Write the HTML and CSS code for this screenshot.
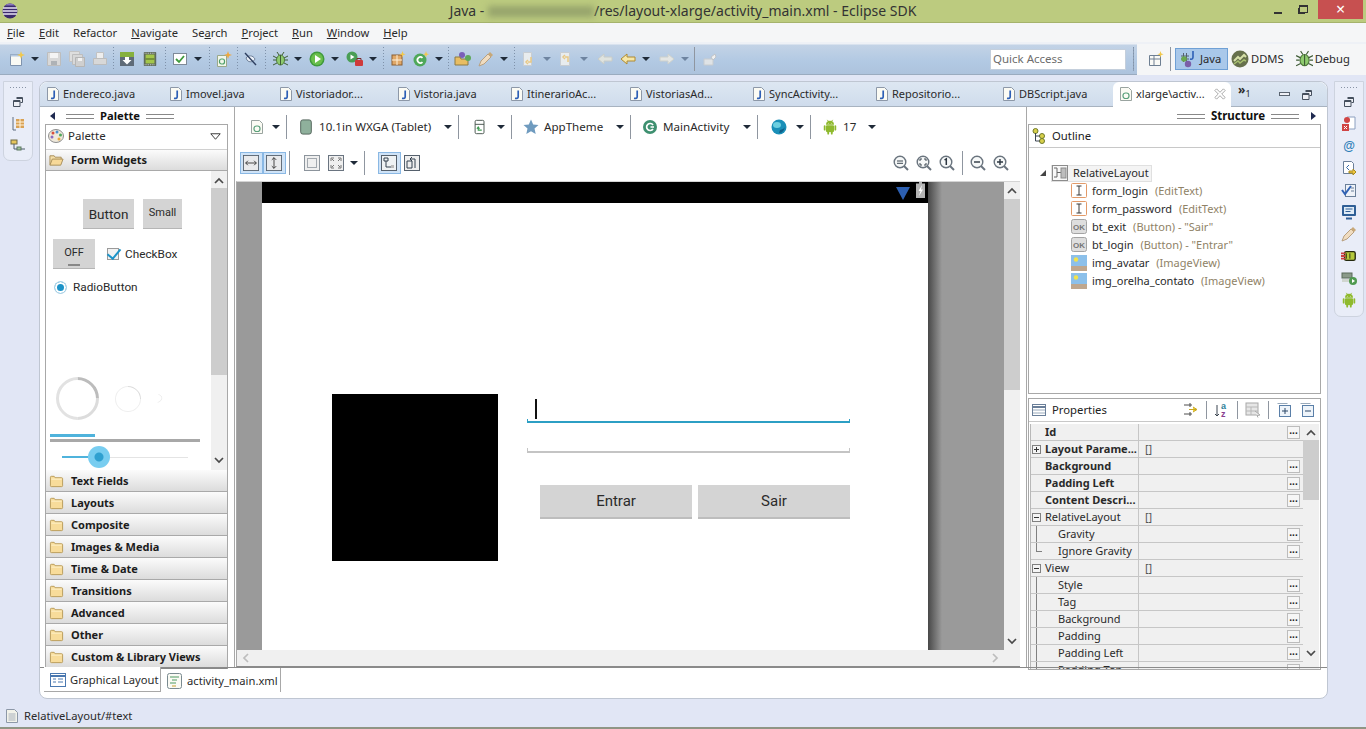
FILE: index.html
```html
<!DOCTYPE html>
<html lang="en">

<head>
  <meta charset="UTF-8">
  <title>Java - activity_main.xml - Eclipse SDK</title>
  <link rel="stylesheet" href="styles.css">
</head>

<body>
  <svg class="defs" xmlns="http://www.w3.org/2000/svg">
    <symbol id="i-eclipse" viewBox="0 0 16 16"><circle cx="8" cy="8" r="7.5" fill="#3b2a6e"/><path d="M1 5h14M.6 8h14.8M1 11h14" stroke="#e8e4f4" stroke-width="1.3"/><path d="M3 2.5a7 7 0 0 1 10 0z" fill="#8a78c0"/></symbol>
    <symbol id="i-java" viewBox="0 0 14 16"><path d="M1.5 1.5h8l3 3v10h-11z" fill="#fbfbf4" stroke="#8d98a8"/><path d="M8.2 4.5v6.2c0 1.6-1.2 2-3.2 1.6" fill="none" stroke="#2d5fb6" stroke-width="1.7"/></symbol>
    <symbol id="i-xml" viewBox="0 0 14 16"><path d="M1.5 1.5h8l3 3v10h-11z" fill="#fbfbf4" stroke="#9aa4a0"/><rect x="4" y="7" width="6" height="5.5" rx="2.5" fill="none" stroke="#5aa07a" stroke-width="1.2"/></symbol>
    <symbol id="i-close" viewBox="0 0 14 14"><path d="M1 3l2-2 4 4 4-4 2 2-4 4 4 4-2 2-4-4-4 4-2-2 4-4z" fill="#fff" stroke="#9a9a9a"/></symbol>
    <symbol id="i-restore" viewBox="0 0 16 16"><path d="M6.5 3.500h6v5h-2M3.500 6.500h6.500v6h-6.500z" fill="#eef0f6" stroke="#46505e"/><path d="M3.500 7.500h6.500M6.500 4.500h6" stroke="#46505e"/></symbol>
    <symbol id="i-minimize" viewBox="0 0 16 16"><rect x="2.500" y="5.500" width="10" height="3" fill="#eef0f6" stroke="#59636f"/></symbol>
    <symbol id="i-hier" viewBox="0 0 16 16"><path d="M3 1v13h3" fill="none" stroke="#5e6c7e"/><path d="M6 3h8v9H6z" fill="#d8a155"/><path d="M6 6h8M6 9h8M10 3v9" stroke="#fff3dc"/></symbol>
    <symbol id="i-tree" viewBox="0 0 16 16"><rect x="1" y="2" width="6" height="4" fill="#e6c65c" stroke="#6f6a45"/><rect x="7" y="9" width="4" height="3" fill="#9fc29a" stroke="#5c7a60"/><path d="M4 6v5h3M11 11h4" stroke="#4f5c6b" fill="none"/></symbol>
    <symbol id="i-new" viewBox="0 0 16 16"><path d="M1.500 3.500h11v11h-11z" fill="#fafaf4" stroke="#7f93ad"/><path d="M1.500 3.500h11v2h-11z" fill="#b5c8e0"/><path d="M12 0l1 3 3 1-3 1-1 3-1-3-3-1 3-1z" fill="#f2c84b"/></symbol>
    <symbol id="i-save" viewBox="0 0 16 16"><path d="M1.500 1.500h13v13h-13z" fill="#d8d8d8" stroke="#bdbdbd"/><path d="M4 2h8v5H4z" fill="#f4f4f4"/><path d="M5 10h6v4H5z" fill="#aeb2b6"/></symbol>
    <symbol id="i-saveall" viewBox="0 0 16 16"><path d="M.500.500h10v10H.500z" fill="#dedede" stroke="#c4c4c4"/><path d="M3.500 3.500h10v10h-10z" fill="#d8d8d8" stroke="#bdbdbd"/><path d="M6.500 6.500h9v9h-9z" fill="#cfcfcf" stroke="#b5b5b5"/><path d="M9 7h4v3H9z" fill="#f2f2f2"/></symbol>
    <symbol id="i-print" viewBox="0 0 16 16"><path d="M4.500 1.500h7v6h-7z" fill="#eeeeee" stroke="#c2c2c2"/><path d="M1.500 7.500h13v6h-13z" fill="#d8d8d8" stroke="#bdbdbd"/></symbol>
    <symbol id="i-sdk" viewBox="0 0 16 16"><rect x="1" y="1" width="14" height="5" fill="#86b13e"/><rect x="1" y="6" width="14" height="9" fill="#5f6b78"/><path d="M6 6h4v3h2.500L8 13.500 3.500 9H6z" fill="#fff"/></symbol>
    <symbol id="i-avd" viewBox="0 0 16 18"><rect x="1" y="1" width="14" height="16" rx="1" fill="#5f6b5a"/><rect x="3" y="4" width="10" height="10" fill="#a3c64a"/><path d="M3 9h10" stroke="#5f7a30" stroke-width="1.500"/><path d="M2 2.500h12M2 15.500h12" stroke="#e6e6e6" stroke-dasharray="1 1"/></symbol>
    <symbol id="i-check" viewBox="0 0 16 16"><rect x="1.500" y="2.500" width="13" height="11" fill="#fff" stroke="#7f8a98"/><path d="M4 8l3 3 5-6" fill="none" stroke="#3f9a3c" stroke-width="1.800"/></symbol>
    <symbol id="i-newand" viewBox="0 0 16 16"><path d="M1.500 4.500h9v11h-9z" fill="#f2f6ea" stroke="#9aa88a"/><rect x="3.500" y="8" width="5" height="5" rx="2" fill="none" stroke="#4fa06a" stroke-width="1.200"/><path d="M12 0l1 3 3 1-3 1-1 3-1-3-3-1 3-1z" fill="#f0a83c"/></symbol>
    <symbol id="i-mark" viewBox="0 0 16 16"><path d="M3 7c2-3 7-3 9 1-1 3-6 4-8 1z" fill="#eaf0f8" stroke="#6f8098"/><path d="M2 2l11 12" stroke="#2e3f60" stroke-width="1.400"/></symbol>
    <symbol id="i-bug" viewBox="0 0 16 16"><ellipse cx="8.500" cy="9" rx="4" ry="5" fill="#8ecb6e" stroke="#4e7a3a"/><path d="M8.500 4v10M1 5l4 2M1 9h3M1 14l4-2M16 5l-4 2M16 9h-3M16 14l-4-2M5 1l2 3M12 1l-2 3" stroke="#3f5c36" fill="none"/></symbol>
    <symbol id="i-run" viewBox="0 0 16 16"><circle cx="8" cy="8" r="7.500" fill="#3f9a3c"/><circle cx="8" cy="8" r="6" fill="#6abf4c"/><path d="M6 4l6 4-6 4z" fill="#fff"/></symbol>
    <symbol id="i-runext" viewBox="0 0 18 16"><circle cx="6" cy="6" r="5.500" fill="#4a9e55"/><path d="M4.500 3.500l4 2.500-4 2.500z" fill="#fff"/><rect x="9" y="9" width="8" height="6" rx="1" fill="#cf3a3a"/><path d="M11 9V7.500h4V9" fill="none" stroke="#7a2323"/></symbol>
    <symbol id="i-newpkg" viewBox="0 0 16 16"><rect x="2" y="4" width="10" height="10" fill="#e0a868" stroke="#8c5f30"/><path d="M2 9h10M7 4v10" stroke="#fff0d8"/><path d="M12.500 0l.800 2.400 2.400.800-2.400.800-.800 2.400-.800-2.400-2.400-.800 2.400-.800z" fill="#f2c84b"/></symbol>
    <symbol id="i-newclass" viewBox="0 0 16 16"><circle cx="7" cy="9" r="6.500" fill="#4fa85a"/><path d="M9.500 6.800A3 3 0 1 0 9.500 11.200" fill="none" stroke="#fff" stroke-width="1.700"/><path d="M13 0l.800 2.400 2.200.800-2.200.800-.800 2.400-.800-2.400-2.200-.800 2.200-.800z" fill="#f2c84b"/></symbol>
    <symbol id="i-openproj" viewBox="0 0 18 16"><circle cx="8" cy="4" r="3" fill="#7a5fb8"/><path d="M1 6h5l1 2h7v6H1z" fill="#e8bd62" stroke="#8c7a45"/><circle cx="14" cy="7" r="3" fill="#5fa85a"/></symbol>
    <symbol id="i-pencil" viewBox="0 0 16 16"><path d="M1 15l2-5 7-7 3 3-7 7z" fill="#f0dcc0" stroke="#b8a080"/><path d="M10 3l2-2 3 3-2 2z" fill="#c8a878"/></symbol>
    <symbol id="i-navdown" viewBox="0 0 16 16"><path d="M2.500 1.500h8v13h-8z" fill="#e8ecee" stroke="#c8cdd2"/><path d="M10 6v5H7M7 9l-2 2 2 2" fill="none" stroke="#e8c884" stroke-width="1.500"/></symbol>
    <symbol id="i-navup" viewBox="0 0 16 16"><path d="M2.500 1.500h9v13h-9z" fill="#e8ecee" stroke="#c8cdd2"/><path d="M10 11V6H7M7 4L5 6l2 2" fill="none" stroke="#e8c884" stroke-width="1.500"/></symbol>
    <symbol id="i-left" viewBox="0 0 16 12"><path d="M1 6l6-5v3h8v4H7v3z" fill="#f6e7a8" stroke="#b08a30"/></symbol>
    <symbol id="i-leftoff" viewBox="0 0 16 12"><path d="M1 6l6-5v3h8v4H7v3z" fill="#dfe3df" stroke="#c8ccc8"/></symbol>
    <symbol id="i-rightoff" viewBox="0 0 16 12"><path d="M15 6L9 1v3H1v4h8v3z" fill="#e4e6e4" stroke="#ccd0cc"/></symbol>
    <symbol id="i-pin" viewBox="0 0 16 16"><path d="M2 8h9v6H2z" fill="#dfe3e6" stroke="#c8cccf"/><path d="M9 6l4-3 1 3-3 3z" fill="#f0f0f0" stroke="#c0c4c8"/></symbol>
    <symbol id="i-persp" viewBox="0 0 16 16"><path d="M1.500 4.500h11v10h-11z" fill="#fafaf6" stroke="#6e7f92"/><path d="M1.500 8h11M6 4.500v10" stroke="#6e7f92"/><path d="M12.500 0l.800 2.400 2.400.800-2.400.800-.800 2.400-.800-2.400-2.400-.800 2.400-.800z" fill="#f2c84b"/></symbol>
    <symbol id="i-javap" viewBox="0 0 18 18"><path d="M2 6h8M2 9h8M4.500 3v9M7.500 3v9" stroke="#55616e"/><circle cx="5" cy="9" r="2.800" fill="#6aa84f"/><circle cx="9" cy="14" r="3.200" fill="#7b5fa8"/><path d="M14 1v6c0 2-1 2.500-3 2" fill="none" stroke="#2d5fb6" stroke-width="1.600"/></symbol>
    <symbol id="i-ddms" viewBox="0 0 18 18"><circle cx="9" cy="9" r="8.500" fill="#66704c"/><path d="M3 11l4-4 2 2 4-4 2 2" fill="none" stroke="#d6e0a8" stroke-width="2"/><path d="M3 14l4-3 2 2 4-3 2 1" fill="none" stroke="#a8c070" stroke-width="1.500"/></symbol>
    <symbol id="i-palette" viewBox="0 0 16 16"><ellipse cx="8" cy="8" rx="7.500" ry="6.500" fill="#efe9dc" stroke="#8d8d8d"/><circle cx="5" cy="5" r="1.500" fill="#d94f3d"/><circle cx="9" cy="4" r="1.500" fill="#4b8fd0"/><circle cx="12.500" cy="7" r="1.500" fill="#4fa85a"/><circle cx="11" cy="11" r="1.500" fill="#e8a93c"/><circle cx="4" cy="9" r="1.500" fill="#8c6abf"/></symbol>
    <symbol id="i-tri-open" viewBox="0 0 14 8"><path d="M1 .5h12L7 7.500z" fill="#fff" stroke="#333" stroke-width="1.200"/></symbol>
    <symbol id="i-folderopen" viewBox="0 0 16 14"><path d="M1 12V2.500h4.500l1 1.500H13v2" fill="#f5dfa8" stroke="#a88d58"/><path d="M1 12.500l2.500-6.500H15l-2.500 6.500z" fill="#f7d998" stroke="#a88d58"/></symbol>
    <symbol id="i-folder" viewBox="0 0 16 14"><path d="M1.500 3a1 1 0 0 1 1-1h3l1 1.500h7a1 1 0 0 1 1 1V12a1 1 0 0 1-1 1h-11a1 1 0 0 1-1-1z" fill="#f8dc9a" stroke="#b89a58"/><path d="M2.500 5h11" stroke="#fff2cc"/></symbol>
    <symbol id="i-device" viewBox="0 0 14 18"><rect x="1" y="1" width="12" height="16" rx="2.500" fill="#8fb09c" stroke="#4c5c54"/></symbol>
    <symbol id="i-rotate" viewBox="0 0 14 18"><rect x="1.500" y="1.500" width="10" height="15" rx="1.500" fill="#fff" stroke="#3d4a44"/><path d="M1.500 6h10" stroke="#3d4a44"/><path d="M9 12.500H5V9.500M3.500 11L5 9l1.500 2" fill="none" stroke="#3e9a50" stroke-width="1.200"/></symbol>
    <symbol id="i-star" viewBox="0 0 16 16"><path d="M8 .5l2.200 5 5.300.5-4 3.600 1.200 5.400L8 12.200 3.300 15l1.200-5.400-4-3.600 5.300-.5z" fill="#6f9bbf"/></symbol>
    <symbol id="i-activity" viewBox="0 0 16 16"><circle cx="8" cy="8" r="7" fill="#3e9070"/><path d="M11 6a3.500 3.500 0 1 0 0 4M8.500 8H12" fill="none" stroke="#fff" stroke-width="1.700"/></symbol>
    <symbol id="i-globe" viewBox="0 0 16 16"><circle cx="8" cy="8" r="7.500" fill="#1a8fb8"/><ellipse cx="6" cy="6" rx="4" ry="3" fill="#6ccfe0"/><path d="M9 11c2-1 4-1 5-3-1 4-3 6-6 6z" fill="#0f5f88"/></symbol>
    <symbol id="i-android" viewBox="0 0 16 18"><path d="M3.500 6.500a4.500 4.500 0 0 1 9 0z" fill="#8fba2e"/><rect x="3.500" y="7" width="9" height="7.500" rx="1" fill="#8fba2e"/><rect x="1" y="7" width="2" height="6" rx="1" fill="#8fba2e"/><rect x="13" y="7" width="2" height="6" rx="1" fill="#8fba2e"/><rect x="5" y="14" width="2" height="3.500" rx="1" fill="#8fba2e"/><rect x="9" y="14" width="2" height="3.500" rx="1" fill="#8fba2e"/><path d="M5 1l1.500 2M11 1L9.500 3" stroke="#8fba2e"/><path d="M6 5h.500M9.500 5h.500" stroke="#fff"/></symbol>
    <symbol id="i-hfit" viewBox="0 0 18 18"><rect x=".5" y=".5" width="17" height="17" fill="#e9eaec" stroke="#55606c"/><path d="M3 9h12M5.500 6.500L3 9l2.500 2.500M12.500 6.500L15 9l-2.500 2.500" fill="none" stroke="#333"/></symbol>
    <symbol id="i-vfit" viewBox="0 0 18 18"><rect x=".5" y=".5" width="17" height="17" fill="#e9eaec" stroke="#55606c"/><path d="M9 3v12M6.500 5.500L9 3l2.500 2.500M6.500 12.500L9 15l2.500-2.500" fill="none" stroke="#333"/></symbol>
    <symbol id="i-dotted" viewBox="0 0 16 16"><rect x=".5" y=".5" width="15" height="15" fill="#efefef" stroke="#8c949c"/><rect x="3.500" y="3.500" width="9" height="9" fill="none" stroke="#55606c" stroke-dasharray="1 1"/></symbol>
    <symbol id="i-expand" viewBox="0 0 16 16"><rect x=".5" y=".5" width="15" height="15" fill="#efefef" stroke="#6a7480"/><path d="M3 6V3h3M10 3h3v3M13 10v3h-3M6 13H3v-3M4 4l2 2M12 4l-2 2M12 12l-2-2M4 12l2-2" fill="none" stroke="#777"/></symbol>
    <symbol id="i-lay1" viewBox="0 0 16 16"><rect x=".5" y=".5" width="15" height="15" fill="#eef2f4" stroke="#55606c"/><path d="M3 3h4v3H3zM5 6v6h5" fill="none" stroke="#33404e"/><rect x="10" y="10" width="3" height="3" fill="#bbb"/></symbol>
    <symbol id="i-lay2" viewBox="0 0 16 16"><rect x=".5" y=".5" width="15" height="15" fill="#efefef" stroke="#55606c"/><path d="M3 6h5v7H3zM11 13V4H6" fill="none" stroke="#33404e"/><path d="M8 2L6 4l2 2" fill="none" stroke="#33404e"/></symbol>
    <symbol id="i-zoomout" viewBox="0 0 16 16"><circle cx="7" cy="7" r="5.800" fill="#f6f8f8" stroke="#6a747e" stroke-width="1.400"/><path d="M4 6h6M4 8.300h6" stroke="#3c4650"/><path d="M11 11l4 4" stroke="#6a747e" stroke-width="2"/></symbol>
    <symbol id="i-zoomfit" viewBox="0 0 16 16"><circle cx="7" cy="7" r="5.800" fill="#f6f8f8" stroke="#6a747e" stroke-width="1.400"/><path d="M4 6V4h2M10 6V4H8M4 8v2h2M10 8v2H8" fill="none" stroke="#3c4650"/><path d="M11 11l4 4" stroke="#6a747e" stroke-width="2"/></symbol>
    <symbol id="i-zoom1" viewBox="0 0 16 16"><circle cx="7" cy="7" r="5.800" fill="#f6f8f8" stroke="#6a747e" stroke-width="1.400"/><path d="M5.500 5L7.300 3.800V10" fill="none" stroke="#2c3640" stroke-width="1.500"/><path d="M11 11l4 4" stroke="#6a747e" stroke-width="2"/></symbol>
    <symbol id="i-zoomminus" viewBox="0 0 16 16"><circle cx="7" cy="7" r="5.800" fill="#f6f8f8" stroke="#6a747e" stroke-width="1.400"/><path d="M4 7h6" stroke="#2c3640" stroke-width="1.400"/><path d="M11 11l4 4" stroke="#6a747e" stroke-width="2"/></symbol>
    <symbol id="i-zoomplus" viewBox="0 0 16 16"><circle cx="7" cy="7" r="5.800" fill="#f6f8f8" stroke="#6a747e" stroke-width="1.400"/><path d="M4 7h6M7 4v6" stroke="#2c3640" stroke-width="1.400"/><path d="M11 11l4 4" stroke="#6a747e" stroke-width="2"/></symbol>
    <symbol id="i-outline" viewBox="0 0 16 16"><circle cx="3.500" cy="3" r="2.500" fill="#d8d04a" stroke="#6f7a2a"/><circle cx="10" cy="8" r="2.500" fill="#d8d04a" stroke="#6f7a2a"/><circle cx="10" cy="13" r="2.500" fill="#d8d04a" stroke="#6f7a2a"/><path d="M3.500 5v8H8M3.500 8H8" fill="none" stroke="#3a4450"/></symbol>
    <symbol id="i-relative" viewBox="0 0 16 16"><rect x=".5" y=".5" width="15" height="15" fill="#f8f8f8" stroke="#8c8c8c"/><path d="M2 3h3v9H2M5 7.500h4" fill="none" stroke="#666"/><rect x="9" y="3" width="5" height="10" fill="#bdbdbd" stroke="#8c8c8c"/></symbol>
    <symbol id="i-edit" viewBox="0 0 16 16"><rect x=".5" y=".5" width="15" height="14" rx="1" fill="#fff" stroke="#e39a68"/><path d="M5.500 3h5M5.500 12h5M8 3v9" stroke="#3a3a3a"/></symbol>
    <symbol id="i-ok" viewBox="0 0 16 16"><rect x=".5" y=".5" width="15" height="14" rx="2" fill="#dedede" stroke="#a4a4a4"/><text class="ok-mark" x="8" y="11" text-anchor="middle">OK</text></symbol>
    <symbol id="i-image" viewBox="0 0 16 16"><rect width="16" height="11" fill="#8cc0ea"/><rect y="11" width="16" height="5" fill="#bfa78e"/><circle cx="5" cy="4.500" r="2.200" fill="#f2e24a"/></symbol>
    <symbol id="i-props" viewBox="0 0 14 14"><rect x=".5" y="1.500" width="13" height="11" fill="#fff" stroke="#6a7f99"/><path d="M.5 4h13" stroke="#6a7f99" stroke-width="2"/><path d="M1 7h12M1 10h12" stroke="#9ab"/></symbol>
    <symbol id="i-filter" viewBox="0 0 16 16"><path d="M1 3h8M1 12h8M7 1v4M7 10v4" stroke="#4c4c4c" fill="none"/><path d="M6 7.500h7M10 5l4 2.500-4 2.500" fill="#f0d040" stroke="#c8a820"/></symbol>
    <symbol id="i-az" viewBox="0 0 16 16"><path d="M3 3v11M1 12l2 2 2-2" fill="none" stroke="#3a4450"/><text class="az-a" x="7" y="7">a</text><text class="az-z" x="7" y="15">z</text></symbol>
    <symbol id="i-propoff" viewBox="0 0 16 16"><rect x="1" y="1" width="12" height="12" fill="#e6e6e6" stroke="#a8a8a8"/><path d="M1 5h12M1 9h12M6 5v8" stroke="#b8b8b8"/><path d="M10 9l5 4-3 .500 1 2" fill="#eee" stroke="#aaa"/></symbol>
    <symbol id="i-plusbox" viewBox="0 0 16 16"><path d="M1.500 1.500h10" stroke="#9ab" fill="none"/><rect x="3.500" y="3.500" width="11" height="11" fill="#eef4fa" stroke="#5a7fa8"/><path d="M6 9h6M9 6v6" stroke="#2c4868"/></symbol>
    <symbol id="i-minusbox" viewBox="0 0 16 16"><path d="M1.500 1.500h10" stroke="#9ab" fill="none"/><rect x="3.500" y="3.500" width="11" height="11" fill="#eef4fa" stroke="#5a7fa8"/><path d="M6 9h6" stroke="#2c4868"/></symbol>
    <symbol id="i-graph" viewBox="0 0 16 16"><rect x=".5" y="1.500" width="15" height="13" fill="#fff" stroke="#4a78b0"/><path d="M.5 4h15" stroke="#4a78b0" stroke-width="2"/><path d="M3 7h3M3 10h3M8 7h5M8 10h5" stroke="#4a78b0"/></symbol>
    <symbol id="i-xmlsrc" viewBox="0 0 16 16"><rect x=".5" y=".5" width="14" height="15" rx="2" fill="#fafaf4" stroke="#7a8a90"/><path d="M3 4h9M5 7h5M3 10h6" stroke="#4f9a60"/><path d="M5 13h4" stroke="#c8a030"/></symbol>
    <symbol id="i-doc" viewBox="0 0 14 16"><path d="M1.500 1.500h8l3 3v10h-11z" fill="#f2f2ea" stroke="#8d98a8"/><path d="M3.500 6h7M3.500 8h7M3.500 10h7M3.500 12h7" stroke="#a8b0bc"/></symbol>
    <symbol id="i-errors" viewBox="0 0 16 16"><path d="M6 1h8v12H8" fill="#fff" stroke="#8ca0c0"/><rect x="1" y="8" width="7" height="7" fill="#d04545"/><path d="M3 10l3 3M6 10l-3 3" stroke="#fff"/><circle cx="6" cy="4" r="3" fill="#d04545"/></symbol>
    <symbol id="i-at" viewBox="0 0 16 16"><text class="at-mark" x="8" y="12" text-anchor="middle">@</text></symbol>
    <symbol id="i-decl" viewBox="0 0 16 16"><path d="M2.500 1.500h8l2 2v10h-10z" fill="#fff" stroke="#6a7f99"/><path d="M8 5L5.500 7.500 8 10" fill="none" stroke="#3a6aa8"/><path d="M8 11h4V9l3 3-3 3v-2H8z" fill="#f0c840" stroke="#a88a20"/></symbol>
    <symbol id="i-tasks" viewBox="0 0 16 16"><rect x="4.500" y="2.500" width="10" height="12" fill="#eef2f8" stroke="#6a7f99"/><path d="M10 6h3M10 9h3" stroke="#6a7f99"/><path d="M1 8l3 4 6-8" fill="none" stroke="#2f62b4" stroke-width="2"/></symbol>
    <symbol id="i-monitor" viewBox="0 0 16 16"><rect x="1" y="1" width="14" height="11" rx="1" fill="#2f5f96"/><rect x="3" y="3" width="10" height="7" fill="#e0ecf6"/><path d="M4.500 5h7M4.500 7.500h5" stroke="#2f5f96"/><path d="M5 14.500h6" stroke="#2f5f96" stroke-width="2"/></symbol>
    <symbol id="i-logcat" viewBox="0 0 18 14"><rect x="4" y="2" width="12" height="10" rx="2" fill="#b5c93c" stroke="#23280e" stroke-width="1.500"/><path d="M0 4h5M0 7h5M0 10h5" stroke="#c84040" stroke-width="2"/><path d="M6 4v6M10 4v6" stroke="#23280e"/></symbol>
    <symbol id="i-devices" viewBox="0 0 16 16"><rect x="1" y="3" width="10" height="5" fill="#8a9a8a" stroke="#5a6a5a"/><rect x="1" y="9" width="8" height="3" fill="#d0d6d0"/><circle cx="12" cy="11" r="4" fill="#4f9a50"/><path d="M11 9l3 2-3 2z" fill="#fff"/></symbol>
    <symbol id="i-bolt" viewBox="0 0 9 16"><path d="M3 0h3v1.500h3V16H0V1.500h3z" fill="#b4b4b4"/><path d="M6 3L2.500 9H4.500L3 14l4-6.500H5z" fill="#fff"/></symbol>
    <symbol id="i-chev-up" viewBox="0 0 10 8"><path d="M1 6l4-4 4 4" fill="none" stroke="#4a4a4a" stroke-width="1.700"/></symbol>
    <symbol id="i-chev-down" viewBox="0 0 10 8"><path d="M1 2l4 4 4-4" fill="none" stroke="#4a4a4a" stroke-width="1.700"/></symbol>
    <symbol id="i-chev-left" viewBox="0 0 8 10"><path d="M6 1L2 5l4 4" fill="none" stroke="#bdbdbd" stroke-width="1.700"/></symbol>
    <symbol id="i-chev-right" viewBox="0 0 8 10"><path d="M2 1l4 4-4 4" fill="none" stroke="#bdbdbd" stroke-width="1.700"/></symbol>
  </svg>

  <header class="titlebar">
    <svg class="title-logo"><use href="#i-eclipse"/></svg>
    <div class="title-text">Java - <span class="blurred"></span>/res/layout-xlarge/activity_main.xml - Eclipse SDK</div>
    <div class="win-controls">
      <span class="win-min"></span>
      <span class="win-max"></span>
      <span class="win-close">&times;</span>
    </div>
  </header>

  <nav class="menubar">
    <span><u>F</u>ile</span><span><u>E</u>dit</span><span>Refactor</span><span><u>N</u>avigate</span><span>Se<u>a</u>rch</span><span><u>P</u>roject</span><span><u>R</u>un</span><span><u>W</u>indow</span><span><u>H</u>elp</span>
  </nav>

  <div class="toolbar">
    <div class="tools">
      <svg class="ic"><use href="#i-new"/></svg><b class="drop"></b>
      <svg class="ic"><use href="#i-save"/></svg><svg class="ic"><use href="#i-saveall"/></svg><svg class="ic"><use href="#i-print"/></svg>
      <i class="grip tight"></i>
      <svg class="ic"><use href="#i-sdk"/></svg><svg class="ic"><use href="#i-avd"/></svg>
      <i class="grip loose"></i>
      <svg class="ic"><use href="#i-check"/></svg><b class="drop"></b>
      <i class="grip loose"></i>
      <svg class="ic"><use href="#i-newand"/></svg>
      <i class="grip tight"></i>
      <svg class="ic"><use href="#i-mark"/></svg>
      <i class="grip"></i>
      <svg class="ic"><use href="#i-bug"/></svg><b class="drop"></b>
      <svg class="ic"><use href="#i-run"/></svg><b class="drop"></b>
      <svg class="ic wide"><use href="#i-runext"/></svg><b class="drop"></b>
      <i class="grip"></i>
      <svg class="ic"><use href="#i-newpkg"/></svg>
      <svg class="ic"><use href="#i-newclass"/></svg><b class="drop"></b>
      <i class="grip tight"></i>
      <svg class="ic wide"><use href="#i-openproj"/></svg>
      <svg class="ic"><use href="#i-pencil"/></svg><b class="drop"></b>
      <i class="grip"></i>
      <svg class="ic"><use href="#i-navdown"/></svg><b class="drop off"></b>
      <svg class="ic"><use href="#i-navup"/></svg><b class="drop off"></b>
      <svg class="ic nudge"><use href="#i-leftoff"/></svg>
      <svg class="ic"><use href="#i-left"/></svg><b class="drop"></b>
      <svg class="ic nudge"><use href="#i-rightoff"/></svg><b class="drop off"></b>
      <i class="rule"></i>
      <svg class="ic"><use href="#i-pin"/></svg>
    </div>
    <div class="quick">Quick Access</div>
    <i class="grip dark"></i>
    <div class="perspectives">
      <svg class="ic"><use href="#i-persp"/></svg>
      <i class="rule"></i>
      <span class="persp current"><svg class="ic big"><use href="#i-javap"/></svg>Java</span>
      <span class="persp ddms"><svg class="ic big"><use href="#i-ddms"/></svg>DDMS</span>
      <span class="persp debug"><svg class="ic big"><use href="#i-bug"/></svg>Debug</span>
    </div>
  </div>

  <main class="workspace">
    <aside class="trim left-trim">
      <i class="trim-dots"></i>
      <svg class="ic"><use href="#i-restore"/></svg>
      <svg class="ic"><use href="#i-hier"/></svg>
      <svg class="ic"><use href="#i-tree"/></svg>
    </aside>

    <section class="editor">
      <div class="tabs">
        <div class="tab"><svg class="tab-ic"><use href="#i-java"/></svg>Endereco.java</div>
        <div class="tab"><svg class="tab-ic"><use href="#i-java"/></svg>Imovel.java</div>
        <div class="tab"><svg class="tab-ic"><use href="#i-java"/></svg>Vistoriador....</div>
        <div class="tab"><svg class="tab-ic"><use href="#i-java"/></svg>Vistoria.java</div>
        <div class="tab"><svg class="tab-ic"><use href="#i-java"/></svg>ItinerarioAc...</div>
        <div class="tab"><svg class="tab-ic"><use href="#i-java"/></svg>VistoriasAd...</div>
        <div class="tab"><svg class="tab-ic"><use href="#i-java"/></svg>SyncActivity...</div>
        <div class="tab"><svg class="tab-ic"><use href="#i-java"/></svg>Repositorio...</div>
        <div class="tab"><svg class="tab-ic"><use href="#i-java"/></svg>DBScript.java</div>
        <div class="tab active"><svg class="tab-ic"><use href="#i-xml"/></svg>xlarge\activ...<svg class="tab-x"><use href="#i-close"/></svg></div>
        <div class="tab-rest">
          <span class="more">&raquo;<sub>1</sub></span>
          <svg class="ic"><use href="#i-minimize"/></svg>
          <svg class="ic"><use href="#i-restore"/></svg>
        </div>
      </div>

      <div class="editor-body">
        <div class="palette-pane">
          <div class="sash-head">
            <b class="tri-left"></b><i class="sash"></i><strong>Palette</strong><i class="sash"></i>
          </div>
          <div class="palette">
            <div class="palette-top"><svg class="ic"><use href="#i-palette"/></svg>Palette<svg class="tri-open"><use href="#i-tri-open"/></svg></div>
            <div class="cat open"><svg class="folder"><use href="#i-folderopen"/></svg>Form Widgets</div>
            <div class="widgets">
              <div class="widget-list">
                <div class="w-row first">
                  <span class="w-btn big">Button</span>
                  <span class="w-btn small">Small</span>
                </div>
                <div class="w-row second">
                  <span class="w-toggle">OFF</span>
                  <span class="w-check"></span>
                  <span class="w-label">CheckBox</span>
                </div>
                <div class="w-row third">
                  <span class="w-radio"></span>
                  <span class="w-label">RadioButton</span>
                </div>
                <div class="w-row spinners">
                  <span class="spin large"></span>
                  <span class="spin medium"></span>
                  <span class="spin tiny"></span>
                </div>
                <div class="bar-blue"></div>
                <div class="bar-gray"></div>
                <div class="seek"><span class="seek-fill"></span><span class="seek-thumb"></span><span class="seek-rest"></span></div>
              </div>
              <div class="scroll-v palette-scroll">
                <svg class="chev"><use href="#i-chev-up"/></svg>
                <i class="thumb"></i>
                <svg class="chev"><use href="#i-chev-down"/></svg>
              </div>
            </div>
            <div class="cat"><svg class="folder"><use href="#i-folder"/></svg>Text Fields</div>
            <div class="cat"><svg class="folder"><use href="#i-folder"/></svg>Layouts</div>
            <div class="cat"><svg class="folder"><use href="#i-folder"/></svg>Composite</div>
            <div class="cat"><svg class="folder"><use href="#i-folder"/></svg>Images &amp; Media</div>
            <div class="cat"><svg class="folder"><use href="#i-folder"/></svg>Time &amp; Date</div>
            <div class="cat"><svg class="folder"><use href="#i-folder"/></svg>Transitions</div>
            <div class="cat"><svg class="folder"><use href="#i-folder"/></svg>Advanced</div>
            <div class="cat"><svg class="folder"><use href="#i-folder"/></svg>Other</div>
            <div class="cat"><svg class="folder"><use href="#i-folder"/></svg>Custom &amp; Library Views</div>
          </div>
        </div>

        <div class="center-pane">
          <div class="config-row">
            <svg class="ic"><use href="#i-xml"/></svg><b class="drop"></b><i class="rule"></i>
            <svg class="ic"><use href="#i-device"/></svg><span class="cfg cfg-device">10.1in WXGA (Tablet)</span><b class="drop"></b><i class="rule"></i>
            <svg class="ic nudge-both"><use href="#i-rotate"/></svg><b class="drop"></b><i class="rule"></i>
            <svg class="ic"><use href="#i-star"/></svg><span class="cfg cfg-theme">AppTheme</span><b class="drop"></b><i class="rule"></i>
            <svg class="ic"><use href="#i-activity"/></svg><span class="cfg cfg-activity">MainActivity</span><b class="drop"></b><i class="rule"></i>
            <svg class="ic nudge-both"><use href="#i-globe"/></svg><b class="drop"></b><i class="rule"></i>
            <svg class="ic"><use href="#i-android"/></svg><span class="cfg cfg-api">17</span><b class="drop"></b>
          </div>
          <div class="view-row">
            <span class="view-group fit-group">
              <span class="toggle on"><svg><use href="#i-hfit"/></svg></span>
              <span class="toggle on"><svg><use href="#i-vfit"/></svg></span>
            </span>
            <i class="rule"></i>
            <span class="view-group grid-group">
              <svg class="ic"><use href="#i-dotted"/></svg>
              <svg class="ic"><use href="#i-expand"/></svg><b class="drop"></b>
            </span>
            <i class="rule"></i>
            <span class="view-group lay-group">
              <span class="toggle on"><svg><use href="#i-lay1"/></svg></span>
              <span class="toggle"><svg><use href="#i-lay2"/></svg></span>
            </span>
            <span class="view-zoom">
              <svg class="ic"><use href="#i-zoomout"/></svg>
              <svg class="ic"><use href="#i-zoomfit"/></svg>
              <svg class="ic"><use href="#i-zoom1"/></svg>
              <i class="rule"></i>
              <svg class="ic"><use href="#i-zoomminus"/></svg>
              <svg class="ic"><use href="#i-zoomplus"/></svg>
            </span>
          </div>
          <div class="canvas-frame">
            <div class="canvas-main">
              <div class="canvas">
                <div class="device">
                  <div class="android-bar">
                    <span class="wifi"></span>
                    <svg class="battery"><use href="#i-bolt"/></svg>
                  </div>
                  <div class="login">
                    <div class="avatar"></div>
                    <div class="login-form">
                      <div class="edit focus"><span class="caret"></span></div>
                      <div class="edit"></div>
                      <div class="login-buttons">
                        <span class="a-btn">Entrar</span>
                        <span class="a-btn">Sair</span>
                      </div>
                    </div>
                  </div>
                </div>
                <div class="device-shadow"></div>
              </div>
              <div class="scroll-h">
                <svg class="chev-h"><use href="#i-chev-left"/></svg>
                <svg class="chev-h"><use href="#i-chev-right"/></svg>
              </div>
            </div>
            <div class="scroll-v canvas-scroll">
              <svg class="chev"><use href="#i-chev-up"/></svg>
              <i class="thumb"></i>
              <svg class="chev"><use href="#i-chev-down"/></svg>
            </div>
          </div>
        </div>

        <div class="side-pane">
          <div class="sash-head right">
            <i class="sash"></i><strong>Structure</strong><i class="sash"></i><b class="tri-right"></b>
          </div>
          <div class="view outline">
            <div class="view-title"><svg class="ic"><use href="#i-outline"/></svg>Outline</div>
            <ul class="tree">
              <li class="root"><b class="tree-tri"></b><span class="root-sel"><svg class="ic"><use href="#i-relative"/></svg>RelativeLayout</span></li>
              <li><svg class="ic"><use href="#i-edit"/></svg>form_login <em>(EditText)</em></li>
              <li><svg class="ic"><use href="#i-edit"/></svg>form_password <em>(EditText)</em></li>
              <li><svg class="ic"><use href="#i-ok"/></svg>bt_exit <em>(Button) - "Sair"</em></li>
              <li><svg class="ic"><use href="#i-ok"/></svg>bt_login <em>(Button) - "Entrar"</em></li>
              <li><svg class="ic"><use href="#i-image"/></svg>img_avatar <em>(ImageView)</em></li>
              <li><svg class="ic"><use href="#i-image"/></svg>img_orelha_contato <em>(ImageView)</em></li>
            </ul>
          </div>
          <div class="view properties">
            <div class="view-title">
              <svg class="ic small"><use href="#i-props"/></svg>Properties
              <span class="view-tools">
                <svg class="ic"><use href="#i-filter"/></svg><i class="rule"></i>
                <svg class="ic"><use href="#i-az"/></svg><i class="rule"></i>
                <svg class="ic"><use href="#i-propoff"/></svg><i class="rule"></i>
                <svg class="ic"><use href="#i-plusbox"/></svg>
                <svg class="ic"><use href="#i-minusbox"/></svg>
              </span>
            </div>
            <div class="prop-wrap">
              <div class="prop-table">
                <div class="p-row bold"><span class="p-name">Id</span><span class="p-val"><b class="dots">...</b></span></div>
                <div class="p-row bold"><span class="p-name"><i class="box plus"></i>Layout Parame...</span><span class="p-val">[]</span></div>
                <div class="p-row bold"><span class="p-name">Background</span><span class="p-val"><b class="dots">...</b></span></div>
                <div class="p-row bold"><span class="p-name">Padding Left</span><span class="p-val"><b class="dots">...</b></span></div>
                <div class="p-row bold"><span class="p-name">Content Descri...</span><span class="p-val"><b class="dots">...</b></span></div>
                <div class="p-row"><span class="p-name"><i class="box"></i>RelativeLayout</span><span class="p-val">[]</span></div>
                <div class="p-row sub"><span class="p-name">Gravity</span><span class="p-val"><b class="dots">...</b></span></div>
                <div class="p-row sub last"><span class="p-name">Ignore Gravity</span><span class="p-val"><b class="dots">...</b></span></div>
                <div class="p-row"><span class="p-name"><i class="box"></i>View</span><span class="p-val">[]</span></div>
                <div class="p-row sub"><span class="p-name">Style</span><span class="p-val"><b class="dots">...</b></span></div>
                <div class="p-row sub"><span class="p-name">Tag</span><span class="p-val"><b class="dots">...</b></span></div>
                <div class="p-row sub"><span class="p-name">Background</span><span class="p-val"><b class="dots">...</b></span></div>
                <div class="p-row sub"><span class="p-name">Padding</span><span class="p-val"><b class="dots">...</b></span></div>
                <div class="p-row sub"><span class="p-name">Padding Left</span><span class="p-val"><b class="dots">...</b></span></div>
                <div class="p-row sub"><span class="p-name">Padding Top</span><span class="p-val"><b class="dots">...</b></span></div>
              </div>
              <div class="scroll-v prop-scroll">
                <svg class="chev"><use href="#i-chev-up"/></svg>
                <i class="thumb"></i>
                <svg class="chev"><use href="#i-chev-down"/></svg>
              </div>
            </div>
          </div>
        </div>
      </div>

      <div class="bottom-tabs">
        <div class="btab current"><svg class="ic"><use href="#i-graph"/></svg>Graphical Layout</div>
        <div class="btab"><svg class="ic"><use href="#i-xmlsrc"/></svg>activity_main.xml</div>
      </div>
    </section>

    <aside class="trim right-trim">
      <i class="trim-dots"></i>
      <svg class="ic"><use href="#i-restore"/></svg>
      <svg class="ic"><use href="#i-errors"/></svg>
      <svg class="ic"><use href="#i-at"/></svg>
      <svg class="ic"><use href="#i-decl"/></svg>
      <svg class="ic"><use href="#i-tasks"/></svg>
      <svg class="ic"><use href="#i-monitor"/></svg>
      <svg class="ic"><use href="#i-pencil"/></svg>
      <svg class="ic"><use href="#i-logcat"/></svg>
      <svg class="ic"><use href="#i-devices"/></svg>
      <svg class="ic"><use href="#i-android"/></svg>
    </aside>
  </main>

  <footer class="statusbar"><svg class="ic"><use href="#i-doc"/></svg>RelativeLayout/#text</footer>
</body>

</html>
```

FILE: styles.css
```css
* {
  box-sizing: border-box;
}

html,
body {
  margin: 0;
  height: 100%;
}

body {
  width: 1366px;
  height: 729px;
  overflow: hidden;
  background-color: #e1e6f5;
  color: #2a2a2a;
  font: 11px/16px "Noto Sans", sans-serif;
}

.defs {
  display: none;
}

.ok-mark {
  font: bold 8px "Liberation Sans", sans-serif;
  fill: #777;
}

.az-a {
  font: bold 9px "Liberation Sans", sans-serif;
  fill: #2f7f9a;
}

.az-z {
  font: bold 9px "Liberation Sans", sans-serif;
  fill: #8a3f8f;
}

.at-mark {
  font: bold 12px "Liberation Sans", sans-serif;
  fill: #2f7fb8;
}

.ic {
  display: block;
  flex: none;
  width: 16px;
  height: 16px;
}

.ic.wide {
  width: 18px;
  margin-right: -1px;
}

.ic.big {
  width: 18px;
  height: 18px;
}

.ic.small {
  width: 14px;
  height: 14px;
}

.ic.nudge {
  margin-left: 2px;
}

.ic.nudge-both {
  margin: 0 2px;
}

.drop {
  flex: none;
  width: 0;
  height: 0;
  margin-left: -1px;
  border-left: 4px solid transparent;
  border-right: 4px solid transparent;
  border-top: 4px solid #1f2a38;
}

.drop.off {
  border-top-color: #6e84a0;
}

.rule {
  flex: none;
  width: 1px;
  height: 24px;
  background-color: #8f96a0;
}

/* window title */
.titlebar {
  display: flex;
  align-items: center;
  height: 23px;
  background-color: #bccb7f;
  border-bottom: 1px solid #a5b36c;
}

.title-logo {
  width: 16px;
  height: 16px;
  margin-left: 2px;
}

.title-text {
  flex: 1;
  margin-left: -18px;
  margin-right: -110px;
  color: #333;
  font-size: 14px;
  text-align: center;
}

.blurred {
  display: inline-block;
  width: 106px;
  height: 11px;
  background-color: #97a56c;
  filter: blur(3px);
  vertical-align: -1px;
}

.win-controls {
  display: flex;
  align-items: center;
  flex: none;
  width: 110px;
  height: 22px;
  align-self: flex-start;
}

.win-min {
  width: 8px;
  height: 2px;
  margin: 3px 0 0 18px;
  background-color: #333;
}

.win-max {
  width: 9px;
  height: 8px;
  margin: -5px 0 0 17px;
  border: 1px solid #333;
  border-top-width: 2px;
  box-shadow: -2px 2px 0 -1px #333;
}

.win-close {
  width: 45px;
  height: 19px;
  margin: -3px 0 0 10px;
  background-color: #c75050;
  color: #fff;
  font-size: 16px;
  line-height: 18px;
  text-align: center;
}

/* menu */
.menubar {
  display: flex;
  gap: 14px;
  height: 19px;
  padding: 2px 0 0 7px;
  background-color: #f5f6f7;
  font-size: 11.2px;
}

/* main toolbar */
.toolbar {
  display: flex;
  align-items: center;
  height: 33px;
  padding: 3px 0 1px 9px;
  background: linear-gradient(#eef1f6 0, #eef1f6 2px, #c3d3e6 3px, #b2c9e3 60%, #adc3dd 100%);
  border-bottom: 1px solid #9aabbf;
}

.tools {
  display: flex;
  align-items: center;
  gap: 7px;
  width: 976px;
}

.tools .rule {
  margin-left: -2px;
}

.grip {
  flex: none;
  width: 1px;
  height: 24px;
  margin: 0 -1px;
  background-image: linear-gradient(#7f92aa 50%, transparent 50%);
  background-size: 1px 3px;
}

.grip.tight {
  margin: 0 -2px;
}

.grip.loose {
  margin: 0 -1px 0 0;
}

.grip.dark {
  margin: 0 3px 0 1px;
  background-color: #8e9fb4;
}

.quick {
  flex: none;
  width: 136px;
  height: 21px;
  margin: 0 6px 0 5px;
  padding: 1px 2px;
  background-color: #fff;
  border: 1px solid #c4cfdc;
  color: #6d6d6d;
  font-size: 11.5px;
}

.perspectives {
  flex: 1;
  display: flex;
  align-items: center;
  height: 31px;
  padding-left: 11px;
  background-color: #f5f6f7;
}

.perspectives .rule {
  margin: 0 4px 0 6px;
}

.persp {
  display: flex;
  align-items: center;
  gap: 2px;
  height: 22px;
  font-size: 11.2px;
}

.persp.current {
  gap: 3px;
  width: 53px;
  padding-left: 3px;
  background-color: #a9c8ea;
  border: 1px solid #6fa0d5;
}

.persp.ddms {
  margin-left: 3px;
}

.persp.debug {
  margin-left: 11px;
}

/* workspace */
.workspace {
  display: flex;
  align-items: flex-start;
  height: 630px;
  padding-top: 6px;
  background-color: #e1e6f5;
}

.trim {
  display: flex;
  flex-direction: column;
  align-items: center;
  gap: 6px;
  width: 30px;
  background-color: #e9edf8;
  border: 1px solid #cdd3df;
  border-radius: 0 0 7px 7px;
}

.left-trim {
  height: 80px;
  margin: 0 6px 0 3px;
}

.right-trim {
  height: 236px;
  margin-left: 6px;
}

.trim-dots {
  width: 16px;
  height: 1px;
  margin-top: 5px;
  background-image: linear-gradient(to right, #8894a6 50%, transparent 50%);
  background-size: 3px 1px;
}

.editor {
  display: flex;
  flex-direction: column;
  width: 1289px;
  height: 618px;
  background-color: #fff;
  border: 1px solid #bfc6d2;
  border-radius: 8px;
}

/* editor tabs */
.tabs {
  display: grid;
  grid-template-columns: 123px 110px 118px 113px 119px 123px 123px 127px 112px 118px 1fr;
  height: 25px;
  padding-left: 5px;
  background: linear-gradient(#dde7f2, #cfdcec);
  border-bottom: 1px solid #a8b3c0;
  border-radius: 8px 8px 0 0;
}

.tab {
  display: flex;
  align-items: center;
  gap: 3px;
  padding: 0 0 2px 1px;
  white-space: nowrap;
  font-size: 11px;
}

.tab-ic {
  flex: none;
  width: 14px;
  height: 16px;
}

.tab.active {
  height: 25px;
  padding-left: 6px;
  background-color: #fff;
  border-radius: 6px 6px 0 0;
}

.tab-x {
  flex: none;
  width: 12px;
  height: 12px;
  margin-left: 6px;
}

.tab-rest {
  display: flex;
  align-items: center;
  padding-left: 7px;
  gap: 6px;
}

.more {
  width: 33px;
  margin-top: -4px;
  font-weight: 700;
  font-size: 12px;
  line-height: 12px;
}

.more sub {
  font-size: 9px;
  font-weight: 400;
}

.editor-body {
  flex: 1;
  display: flex;
  min-height: 0;
}

/* palette */
.palette-pane {
  flex: none;
  width: 195px;
  padding: 1px 6px 0 5px;
  border-right: 1px solid #a8a8a8;
}

.sash-head {
  display: flex;
  align-items: center;
  gap: 6px;
  height: 16px;
  padding-left: 5px;
  font-size: 11.2px;
  color: #111;
}

.sash-head.right {
  justify-content: flex-end;
  padding: 0 5px 0 0;
  font-size: 11.5px;
}

.sash {
  width: 28px;
  height: 5px;
  border-top: 1px solid #888;
  border-bottom: 1px solid #888;
}

.tri-left,
.tri-right {
  width: 0;
  height: 0;
  margin-right: 5px;
  border-top: 4px solid transparent;
  border-bottom: 4px solid transparent;
  border-right: 5px solid #1f2a50;
}

.tri-right {
  margin: 0 0 0 6px;
  border-right: 0;
  border-left: 5px solid #1f2a50;
}

.palette {
  height: 545px;
  border: 1px solid #a8a8a8;
  border-bottom-color: #888;
  overflow: hidden;
}

.palette-top {
  display: flex;
  align-items: center;
  gap: 4px;
  height: 24px;
  padding: 0 6px 2px 2px;
  font-size: 11.5px;
}

.tri-open {
  flex: none;
  width: 11px;
  height: 7px;
  margin-left: auto;
}

.cat {
  display: flex;
  align-items: center;
  gap: 7px;
  height: 22px;
  padding-left: 3px;
  background: linear-gradient(#fbfbfb, #dcdcdc);
  border-bottom: 1px solid #a9a9a9;
  color: #1c1c1c;
  font-weight: 700;
}

.cat.open {
  border-top: 1px solid #d0d0d0;
}

.folder {
  flex: none;
  width: 15px;
  height: 14px;
}

.widgets {
  display: flex;
  height: 299px;
}

.widget-list {
  flex: 1;
  padding: 28px 0 0 4px;
  font-family: Roboto, sans-serif;
}

.scroll-v {
  display: flex;
  flex-direction: column;
  align-items: center;
  flex: none;
  width: 16px;
  background-color: #f0f0f0;
}

.chev {
  flex: none;
  width: 10px;
  height: 8px;
}

.thumb {
  display: block;
  width: 100%;
  background-color: #cdcdcd;
}

.palette-scroll {
  padding-top: 6px;
}

.palette-scroll .thumb {
  height: 187px;
  margin: 3px 0 81px;
}

.w-row {
  display: flex;
  align-items: center;
}

.first {
  gap: 9px;
  padding-left: 33px;
}

.w-btn {
  height: 30px;
  background-color: #d4d4d4;
  border-bottom: 1px solid #b5b5b5;
  text-align: center;
}

.w-btn.big {
  width: 51px;
  font-size: 13.5px;
  line-height: 30px;
}

.w-btn.small {
  width: 39px;
  font-size: 11px;
  line-height: 28px;
}

.second {
  margin-top: 10px;
  padding-left: 3px;
}

.w-toggle {
  width: 42px;
  height: 30px;
  background: linear-gradient(#888, #888) no-repeat center 25px / 12px 2px #d4d4d4;
  border-bottom: 1px solid #b5b5b5;
  font-size: 11px;
  line-height: 28px;
  text-align: center;
}

.w-check {
  position: relative;
  width: 12px;
  height: 12px;
  margin: 0 6px 0 12px;
  background-color: #f2f2f2;
  border: 1px solid #9a9a9a;
}

/* the tick sticks out of its box */
.w-check::after {
  content: "";
  position: absolute;
  left: 2px;
  top: -3px;
  width: 6px;
  height: 11px;
  border-right: 2px solid #1c93c8;
  border-bottom: 2px solid #1c93c8;
  transform: rotate(40deg);
}

.w-label {
  font-size: 11.8px;
}

.third {
  gap: 6px;
  margin-top: 10px;
  padding-left: 4px;
}

.w-radio {
  width: 13px;
  height: 13px;
  background-color: #1c93c8;
  border: 1px solid #b5d6e8;
  border-radius: 50%;
  box-shadow: inset 0 0 0 2px #fff;
}

.spinners {
  gap: 16px;
  height: 43px;
  margin-top: 82px;
  padding-left: 6px;
}

.spin {
  flex: none;
  border-style: solid;
  border-color: #bcbcbc #dcdcdc #e2e2e2 #e2e2e2;
  border-radius: 50%;
  transform: rotate(45deg);
}

.spin.large {
  width: 43px;
  height: 43px;
  border-width: 3px;
}

.spin.medium {
  width: 26px;
  height: 26px;
  border-width: 1.5px;
  border-color: #dcdcdc #efefef #efefef #efefef;
}

.spin.tiny {
  width: 8px;
  height: 9px;
  margin-left: -3px;
  border-width: 1px;
  border-color: #eeeeee #eeeeee transparent transparent;
}

.bar-blue {
  width: 45px;
  height: 3px;
  margin: 14px 0 0;
  background-color: #4fb3dc;
}

.bar-gray {
  width: 150px;
  height: 3px;
  margin-top: 2px;
  background-color: #a8a8a8;
}

.seek {
  display: flex;
  align-items: center;
  height: 22px;
  margin-top: 4px;
  padding-left: 12px;
}

.seek-fill {
  width: 26px;
  height: 2px;
  background-color: #4fb3dc;
}

.seek-thumb {
  flex: none;
  width: 22px;
  height: 22px;
  background: radial-gradient(circle, #2fa0d0 0 4px, #78cdf0 5px);
  border-radius: 50%;
}

.seek-rest {
  width: 78px;
  height: 1px;
  background-color: #e4e4e4;
}

/* centre */
.center-pane {
  flex: none;
  width: 792px;
  border-right: 1px solid #a8a8a8;
  padding-left: 1px;
}

.config-row {
  display: flex;
  align-items: center;
  gap: 6px;
  height: 40px;
  padding-left: 13px;
  font-size: 11.6px;
}

.config-row .rule {
  margin-right: 5px;
}

.config-row .drop {
  margin-left: 1px;
}

.view-row {
  display: flex;
  align-items: center;
  height: 30px;
  padding: 2px 0 0 4px;
}

.view-group {
  display: flex;
  align-items: center;
}

.fit-group {
  margin-right: 3px;
}

.grid-group {
  gap: 8px;
  margin: 0 6px 0 14px;
}

.grid-group .drop {
  margin-left: -2px;
}

.lay-group {
  margin-left: 13px;
}

.cfg {
  flex: none;
  margin-left: -1px;
}

.cfg-device {
  width: 118px;
}

.cfg-theme {
  width: 65px;
}

.cfg-activity {
  width: 73px;
}

.cfg-api {
  width: 18px;
}

.toggle {
  display: block;
  flex: none;
  width: 23px;
  height: 22px;
  padding: 2px;
  border: 1px solid transparent;
}

.toggle svg {
  display: block;
  width: 16px;
  height: 16px;
}

.toggle.on {
  background-color: #cfe3f7;
  border-color: #8ab8e4;
}

.view-zoom {
  display: flex;
  align-items: center;
  gap: 7px;
  margin-left: auto;
  margin-right: 17px;
}

.canvas-frame {
  display: flex;
  width: 784px;
  height: 486px;
  margin-top: 4px;
  border-top: 1px solid #d4d4d4;
  border-bottom: 1px solid #8a8a8a;
  border-left: 1px solid #a8a8a8;
}

.canvas-main {
  width: 768px;
}

.canvas {
  display: flex;
  height: 468px;
  padding-left: 25px;
  background-color: #9a9a9a;
}

.device {
  flex: none;
  width: 666px;
  height: 468px;
  background-color: #fff;
}

.device-shadow {
  width: 14px;
  height: 100%;
  background: linear-gradient(to right, #484848, #9a9a9a);
}

.android-bar {
  display: flex;
  align-items: flex-start;
  justify-content: flex-end;
  gap: 6px;
  height: 21px;
  padding-right: 3px;
  background-color: #000;
}

.wifi {
  width: 0;
  height: 0;
  margin-top: 5px;
  border-left: 7px solid transparent;
  border-right: 7px solid transparent;
  border-top: 13px solid #2c5fb0;
}

.battery {
  width: 9px;
  height: 16px;
}

.login {
  display: flex;
  gap: 29px;
  padding: 191px 0 0 70px;
}

.avatar {
  flex: none;
  width: 166px;
  height: 167px;
  background-color: #000;
}

.login-form {
  width: 323px;
  font-family: Roboto, sans-serif;
}

.edit {
  display: flex;
  align-items: flex-end;
  height: 30px;
  padding: 0 0 2px 7px;
  border: solid #c4c4c4;
  border-width: 0 1px 2px;
  border-image: linear-gradient(to bottom, transparent 88%, #c4c4c4 88%) 1;
}

.edit.focus {
  height: 29px;
  border-image: linear-gradient(to bottom, transparent 88%, #2c9fc4 88%) 1;
}

.caret {
  width: 2px;
  height: 20px;
  background-color: #111;
}

.login-buttons {
  display: flex;
  gap: 6px;
  margin: 32px 0 0 13px;
}

.a-btn {
  width: 152px;
  height: 34px;
  background-color: #d4d4d4;
  border-bottom: 2px solid #bdbdbd;
  color: #2b2b2b;
  font-size: 15px;
  line-height: 32px;
  text-align: center;
}

.scroll-h {
  display: flex;
  align-items: center;
  justify-content: space-between;
  height: 16px;
  padding: 0 5px;
  background-color: #f0f0f0;
}

.chev-h {
  width: 8px;
  height: 10px;
}

.canvas-scroll {
  height: 484px;
  padding-top: 5px;
}

.canvas-scroll .thumb {
  height: 191px;
  margin: 4px 0 247px;
}

/* right side */
.side-pane {
  flex: 1;
  padding: 1px 6px 0 1px;
}

.view {
  border: 1px solid #a8a8a8;
}

.outline {
  height: 270px;
}

.view-title {
  display: flex;
  align-items: center;
  gap: 4px;
  height: 23px;
  padding-left: 3px;
  font-size: 11.3px;
  color: #222;
  border-bottom: 1px solid #c8c8c8;
}

.tree {
  margin: 0;
  padding: 16px 0 0 42px;
  list-style: none;
}

.tree li {
  display: flex;
  align-items: center;
  gap: 5px;
  height: 18px;
  font-size: 11px;
  white-space: pre;
}

.tree em {
  margin-left: -1px;
  color: #8f8266;
  font-style: normal;
}

.tree .root {
  margin-left: -31px;
}

.tree-tri {
  width: 0;
  height: 0;
  border-left: 6px solid transparent;
  border-bottom: 6px solid #444;
}

.root-sel {
  display: flex;
  align-items: center;
  gap: 5px;
  height: 17px;
  padding: 0 2px 0 0;
  background-color: #f4f4f4;
  border: 1px solid #e0e0e0;
}

.properties {
  height: 272px;
  margin-top: 4px;
}

.view-title .ic.small {
  margin-right: 2px;
}

.view-tools {
  display: flex;
  align-items: center;
  gap: 7px;
  margin-left: auto;
  padding-right: 5px;
}

.view-tools .rule {
  height: 18px;
}

.prop-wrap {
  display: flex;
  height: 245px;
  margin: 2px 1px 0;
  overflow: hidden;
}

.prop-table {
  flex: 1;
  height: 245px;
  overflow: hidden;
  background-color: #f0f0f0;
  border-left: 1px solid #b8b8b8;
}

.p-row {
  display: grid;
  grid-template-columns: 108px 1fr;
  height: 17px;
  border-bottom: 1px solid #c6c6c6;
  line-height: 16px;
}

.p-name {
  display: flex;
  align-items: center;
  padding-left: 14px;
  border-right: 1px solid #c6c6c6;
  white-space: nowrap;
  overflow: hidden;
}

.p-row.bold .p-name {
  font-weight: 700;
}

.p-row.sub .p-name {
  padding-left: 27px;
  background: linear-gradient(#808080, #808080) no-repeat 5px 0 / 1px 100%;
}

.p-row.sub.last .p-name {
  background:
    linear-gradient(#808080, #808080) no-repeat 5px 0 / 1px 50%,
    linear-gradient(#808080, #808080) no-repeat 5px 50% / 6px 1px;
}

.p-val {
  display: flex;
  align-items: center;
  justify-content: space-between;
  padding: 0 3px 0 6px;
  color: #555;
}

.p-val:has(.dots) {
  justify-content: flex-end;
}

.dots {
  display: block;
  width: 13px;
  height: 13px;
  background-color: #f6f6f6;
  border: 1px solid #bcbcbc;
  color: #222;
  font-size: 10px;
  line-height: 6px;
  text-align: center;
}

.box {
  flex: none;
  width: 9px;
  height: 9px;
  margin: 0 4px 0 -13px;
  background: linear-gradient(#333, #333) no-repeat center / 5px 1px #f4f4f4;
  border: 1px solid #808080;
}

.box.plus {
  background:
    linear-gradient(#333, #333) no-repeat center / 5px 1px,
    linear-gradient(#333, #333) no-repeat center / 1px 5px,
    #f4f4f4;
}

.prop-scroll {
  height: 245px;
  padding-top: 5px;
}

.prop-scroll .thumb {
  height: 60px;
  margin: 3px 0 149px;
}

/* bottom tabs */
.bottom-tabs {
  display: flex;
  height: 31px;
  padding-left: 4px;
  border-top: 1px solid #8a8a8a;
  font-size: 11.2px;
}

.btab {
  display: flex;
  align-items: center;
  gap: 4px;
  height: 24px;
  padding: 2px 2px 0 6px;
  border-right: 1px solid #a8a8a8;
  white-space: nowrap;
}

.btab.current {
  width: 117px;
  height: 25px;
  margin-top: -1px;
  padding-left: 6px;
  background-color: #fff;
  border-bottom: 1px solid #a8a8a8;
}

.statusbar {
  display: flex;
  align-items: center;
  gap: 4px;
  height: 24px;
  padding-left: 4px;
  background-color: #e1e6f5;
  border-bottom: 2px solid #8f9585;
  font-size: 11.2px;
}
```
